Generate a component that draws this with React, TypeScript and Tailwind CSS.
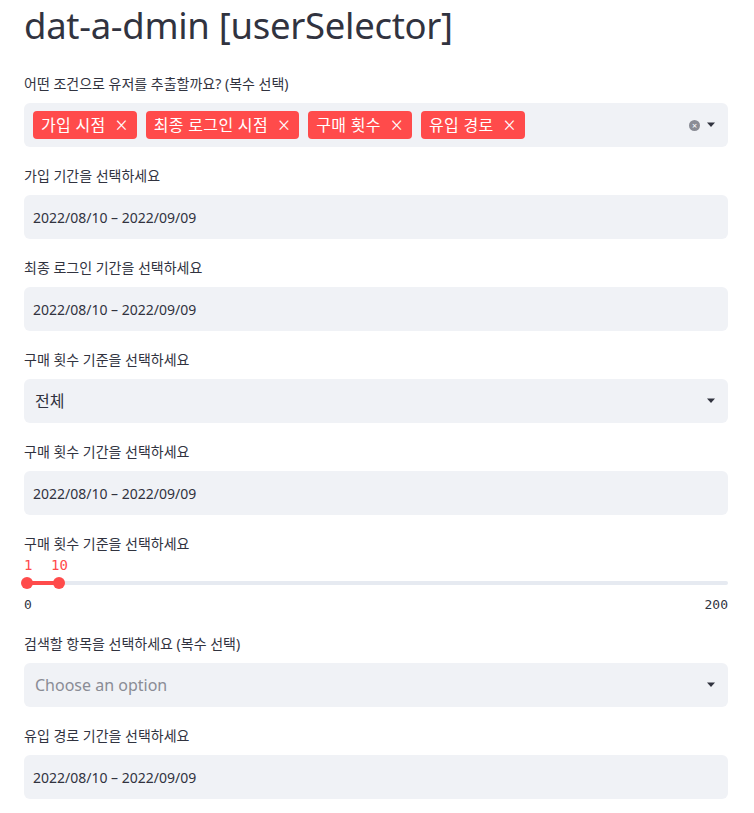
const sans = "font-['Noto_Sans','Noto_Sans_CJK_KR',sans-serif]"
const mono = "font-['DejaVu_Sans_Mono','Liberation_Mono',monospace]"

function Caret() {
  return (
    <svg width="10" height="6" viewBox="0 0 10 6" className="shrink-0">
      <path d="M1 0.5h8L5 5z" fill="#31333f" />
    </svg>
  )
}

function Label({ children, tight }: { children: React.ReactNode; tight?: boolean }) {
  return (
    <div className={`h-6 ${tight ? 'mb-0' : 'mb-2'} flex items-center text-[14px] text-[#31333f]`}>
      {children}
    </div>
  )
}

function DateInput({ label }: { label: string }) {
  return (
    <div>
      <Label>{label}</Label>
      <div className="h-11 rounded-md bg-[#f0f2f6] px-[9px] flex items-center text-[14px] text-[#31333f]">
        2022/08/10 – 2022/09/09
      </div>
    </div>
  )
}

function Select({
  label,
  value,
  placeholder,
}: {
  label: string
  value?: string
  placeholder?: string
}) {
  return (
    <div>
      <Label>{label}</Label>
      <div className="h-11 rounded-md bg-[#f0f2f6] pl-[11px] pr-[12px] flex items-center justify-between text-[16px]">
        {value ? (
          <span className="text-[#31333f]">{value}</span>
        ) : (
          <span className="text-[#8a8c95]">{placeholder}</span>
        )}
        <Caret />
      </div>
    </div>
  )
}

export default function App() {
  const tags = ['가입 시점', '최종 로그인 시점', '구매 횟수', '유입 경로']

  return (
    <div className={`${sans} bg-white min-h-screen pl-6 pr-[26px] text-[#31333f]`}>
      <h1 className="text-[36.5px] leading-[50px] text-[#31333f] tracking-[-0.3px]">
        dat-a-dmin [userSelector]
      </h1>

      <div className="mt-[21px] flex flex-col gap-4">
        <div>
          <Label>어떤 조건으로 유저를 추출할까요? (복수 선택)</Label>
          <div className="h-11 rounded-md bg-[#f0f2f6] pl-[9px] pr-[12px] flex items-center justify-between">
            <div className="flex gap-[9px]">
              {tags.map((t) => (
                <span
                  key={t}
                  className="h-7 rounded-[4px] bg-[#ff4b4b] text-white text-[16px] tracking-[0.3px] pl-2 pr-[9px] flex items-center gap-[10px]"
                >
                  {t}
                  <span className="text-[21px] leading-none font-light">×</span>
                </span>
              ))}
            </div>
            <div className="flex items-center gap-[6px]">
              <span className="w-[11px] h-[11px] rounded-full bg-[#8a8c95] text-white text-[9px] leading-none flex items-center justify-center">
                ×
              </span>
              <Caret />
            </div>
          </div>
        </div>

        <DateInput label="가입 기간을 선택하세요" />
        <DateInput label="최종 로그인 기간을 선택하세요" />
        <Select label="구매 횟수 기준을 선택하세요" value="전체" />
        <DateInput label="구매 횟수 기간을 선택하세요" />

        <div>
          <Label tight>구매 횟수 기준을 선택하세요</Label>
          <div className={`${mono} relative h-[22px] text-[14px] text-[#ff4b4b]`}>
            <span className="absolute left-0 top-0">1</span>
            <span className="absolute left-[27px] top-0">10</span>
          </div>
          <div className="relative h-3 flex items-center">
            <div className="h-1 w-full rounded-full bg-[#e6eaf1]" />
            <div className="absolute left-[3px] w-[32px] h-1 bg-[#ff4b4b]" />
            <span className="absolute left-[-3px] w-3 h-3 rounded-full bg-[#ff4b4b]" />
            <span className="absolute left-[29px] w-3 h-3 rounded-full bg-[#ff4b4b]" />
          </div>
          <div className={`${mono} flex justify-between text-[13px] text-[#31333f] mt-[6px] h-[20px]`}>
            <span>0</span>
            <span>200</span>
          </div>
        </div>

        <Select label="검색할 항목을 선택하세요 (복수 선택)" placeholder="Choose an option" />
        <DateInput label="유입 경로 기간을 선택하세요" />
      </div>
    </div>
  )
}
